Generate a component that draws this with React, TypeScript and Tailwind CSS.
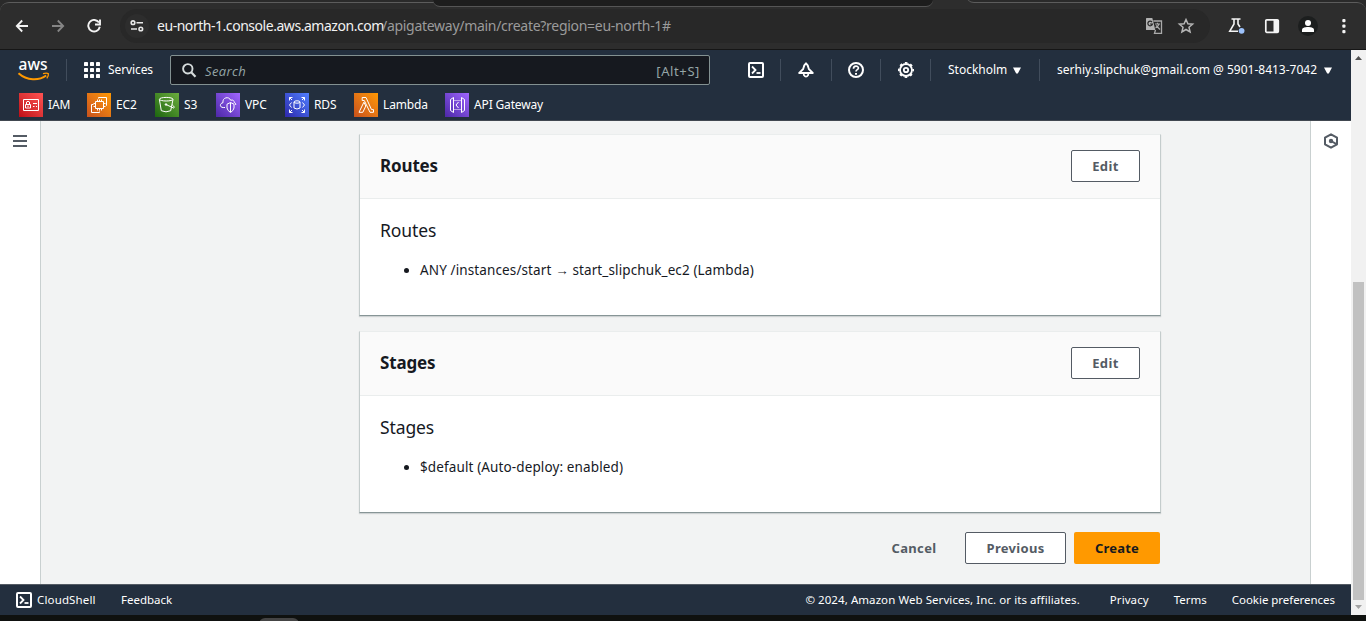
import type { ReactNode } from 'react';

const ember = "font-['Noto_Sans','Open_Sans',sans-serif]";

function TerminalIcon() {
  return (
    <svg width="16" height="16" viewBox="0 0 16 16" fill="none" stroke="#fff" strokeWidth="2" className="shrink-0">
      <rect x="1" y="1" width="14" height="14" rx="1" />
      <path d="M4 4.5L7.5 8L4 11.5" strokeWidth="1.8" />
      <path d="M8.5 11H12.5" strokeWidth="1.8" />
    </svg>
  );
}

function BrowserBar() {
  return (
    <div className="relative h-[50px] shrink-0 overflow-hidden bg-[#2a2a2a] pt-[2px]">
      <div className="flex h-[48px] items-center rounded-t-[9px] border-t border-b border-t-[#5c5c5c] border-b-[#161616] bg-[#2d2d2d]">
        <svg className="ml-[15px] shrink-0" width="14" height="14" viewBox="0 0 14 14" fill="none" stroke="#f3f3f3" strokeWidth="1.8"><path d="M13 7H2M7.2 1.5L1.8 7L7.2 12.5" /></svg>
        <svg className="ml-[22px] shrink-0" width="14" height="14" viewBox="0 0 14 14" fill="none" stroke="#858585" strokeWidth="1.8"><path d="M1 7H12M6.8 1.5L12.2 7L6.8 12.5" /></svg>
        <svg className="ml-[22px] shrink-0" width="14" height="14" viewBox="0 0 14 14" fill="none" stroke="#f3f3f3" strokeWidth="1.9"><path d="M12 3.6A5.8 5.8 0 1 0 12.8 7.8" /><path d="M13 0.6V5.5H8" /></svg>
        <div className="ml-[19px] flex h-[34px] w-[1090px] shrink-0 items-center rounded-full bg-[#282828] pl-[5px]">
          <div className="flex size-6 items-center justify-center rounded-full bg-[#2d2d2d]">
            <svg width="14" height="14" viewBox="0 0 14 14" fill="none" stroke="#e8e8e8" strokeWidth="1.6"><circle cx="3" cy="3.7" r="1.8" /><path d="M6.5 3.7H13M1 10H7" /><circle cx="10.8" cy="10" r="1.8" /></svg>
          </div>
          <div className="ml-[8px] flex whitespace-pre font-['Noto_Sans',sans-serif] text-[14px] leading-5">
            <span className="w-[225px] tracking-[-0.46px] text-[#f2f2f2]">eu-north-1.console.aws.amazon.com</span>
            <span className="tracking-[-0.29px] text-[#9b9b9b]">/apigateway/main/create?region=eu-north-1#</span>
          </div>
          <svg className="ml-auto shrink-0" width="18" height="18" viewBox="0 0 18 18">
            <path d="M8.3 4H16.5V16.3H9.5L10.5 13" fill="none" stroke="#aaa" strokeWidth="1.3" />
            <path d="M1.5 1H7.3L10.3 13H1.5Q1 13 1 12.5V1.5Q1 1 1.5 1Z" fill="#b2b2b2" />
            <path d="M7 5.1A2.3 2.3 0 1 0 7.4 7H5" fill="none" stroke="#282828" strokeWidth="1.2" />
            <path d="M10 7H15M12.5 5.8V7M14 7Q13 10 10.5 11M11 8.5L15 12.5" fill="none" stroke="#aaa" strokeWidth="1.2" />
          </svg>
          <svg className="ml-[14px] mr-[15px] shrink-0" width="18" height="18" viewBox="0 0 18 18" fill="none" stroke="#b5b5b5" strokeWidth="1.5"><path d="M9 2.5L10.9 6.8L15.6 7.2L12 10.3L13.1 15L9 12.5L4.9 15L6 10.3L2.4 7.2L7.1 6.8Z" /></svg>
        </div>
        <svg className="ml-[18px] shrink-0" width="18" height="18" viewBox="0 0 18 18" fill="none" stroke="#f4f4f4" strokeWidth="1.6"><path d="M3.5 2H12.5M6 2V7L1.8 14.2H10M10 2V7L12 10" /><circle cx="13.6" cy="13.8" r="2.9" fill="#9dc2fb" stroke="none" /></svg>
        <svg className="ml-[18px] shrink-0" width="16" height="16" viewBox="0 0 16 16"><rect x="1.8" y="1.8" width="12.5" height="12.5" rx="1" fill="none" stroke="#f4f4f4" strokeWidth="1.7" /><path d="M9.5 2H15V14H9.5Z" fill="#f4f4f4" /></svg>
        <div className="ml-[18px] flex size-5 shrink-0 items-center justify-center rounded-full bg-[#1c1e1e]">
          <svg width="14" height="14" viewBox="0 0 14 14" fill="#fff"><circle cx="7" cy="4" r="3" /><path d="M1 13V11C1 8.8 4 8 7 8S13 8.8 13 11V13Z" /></svg>
        </div>
        <svg className="ml-[24px] shrink-0" width="4" height="16" viewBox="0 0 4 16" fill="#f4f4f4"><rect x=".3" y="1" width="3.2" height="3.2" rx="1" /><rect x=".3" y="6.5" width="3.2" height="3.2" rx="1" /><rect x=".3" y="12" width="3.2" height="3.2" rx="1" /></svg>
      </div>
      <div className="absolute top-0 left-[925px] h-[4px] w-[50px] bg-[#2d2d2d]" />
      <div className="absolute top-0 left-[433px] h-[7px] w-[500px] rounded-b-[8px] border-b border-[#555] bg-[#1d1d1d]" />
      <div className="absolute top-[-7px] left-[966px] h-[10px] w-[384px] rounded-bl-[8px] border-b border-[#5c5c5c] bg-[#2a2a2a]" />
    </div>
  );
}

function Divider({ className }: { className: string }) {
  return <div className={`h-[22px] w-px shrink-0 bg-[#414d5c] ${className}`} />;
}

function Caret({ className }: { className: string }) {
  return <svg className={className} width="8" height="7" viewBox="0 0 8 7" fill="#fff"><path d="M0 .5H8L4.8 6.5H3.2Z" /></svg>;
}

type ServiceProps = { name: string; box: string; label: string; children: ReactNode };

function Service({ name, box, label, children }: ServiceProps) {
  return (
    <div className={`flex shrink-0 items-center ${box}`}>
      <div className={`size-6 shrink-0 ${label}`}>
        <svg width="24" height="24" viewBox="0 0 24 24" fill="none" stroke="#fff" strokeWidth="1">{children}</svg>
      </div>
      <span className="ml-[5px] whitespace-nowrap text-[12px] leading-5 tracking-[-0.15px]">{name}</span>
    </div>
  );
}

function Header() {
  return (
    <header className={`h-[71px] shrink-0 border-b border-[#414750] bg-[#232f3e] text-[12px] text-white ${ember}`}>
      <div className="flex h-10 items-center">
        <svg className="ml-[17px] shrink-0" width="34" height="34" viewBox="0 -6 34 34">
          <text x="1.5" y="10.8" fontFamily="Noto Sans, sans-serif" fontSize="16.5" fontWeight="500" fill="#fff" textLength="29" lengthAdjust="spacingAndGlyphs">aws</text>
          <path d="M1.5 14.2C10 21.8 22 21.8 29.2 16.5" fill="none" stroke="#f90" strokeWidth="2" />
          <path d="M26 14.6Q30 13.5 31.4 14.7Q31.7 17 29.8 19.4" fill="none" stroke="#f90" strokeWidth="1.3" />
        </svg>
        <Divider className="ml-[15px]" />
        <svg className="ml-[17px] shrink-0" width="16" height="16" viewBox="0 0 16 16" fill="#fff">
          {[0, 6, 12].map((y) => [0, 6, 12].map((x) => <rect key={`${x}-${y}`} x={x} y={y} width="4" height="4" rx=".4" />))}
        </svg>
        <span className="ml-[8px] w-[46px] whitespace-nowrap text-[12px] tracking-[-0.1px]">Services</span>
        <div className="ml-[16px] flex h-[30px] w-[540px] shrink-0 items-center rounded-[2px] border border-[#839191] bg-[#16191f] pl-[11px] pr-[9px] text-[13px] text-[#95a5a6]">
          <svg width="15" height="15" viewBox="0 0 15 15" fill="none" stroke="#d5dbdb" strokeWidth="1.9"><circle cx="5.8" cy="5.8" r="4.7" /><path d="M9.2 9.2L13.5 13.8" strokeWidth="2.2" /></svg>
          <span className="ml-[8px] pt-[3px] font-['Open_Sans',sans-serif] tracking-[0.35px] italic">Search</span>
          <span className="ml-auto pt-[3px] tracking-[0.6px]">[Alt+S]</span>
        </div>
        <div className="ml-[38px] flex"><TerminalIcon /></div>
        <Divider className="ml-[16px]" />
        <svg className="ml-[17px] shrink-0" width="16" height="16" viewBox="0 0 16 16" fill="none" stroke="#fff" strokeWidth="1.8"><path d="M8 1.2C6 2.6 5.7 5 5.2 7L1.2 11H14.8L10.8 7C10.3 5 10 2.6 8 1.2Z" strokeLinejoin="round" /><path d="M5.8 11.5V13Q8 16.4 10.2 13V11.5" strokeWidth="1.7" /></svg>
        <Divider className="ml-[17px]" />
        <svg className="ml-[16px] shrink-0" width="16" height="16" viewBox="0 0 16 16" fill="none" stroke="#fff" strokeWidth="2"><circle cx="8" cy="8" r="7" /><path d="M5.5 6.7C5.5 3.4 10.4 3.6 10.4 6C10.4 7.8 8 7.4 8 9.5" strokeWidth="1.7" /><path d="M7 11H9V12.7H7Z" fill="#fff" stroke="none" /></svg>
        <Divider className="ml-[16px]" />
        <svg className="ml-[17px] shrink-0" width="16" height="16" viewBox="0 0 16 16" fill="none" stroke="#fff"><circle cx="8" cy="8" r="6" strokeWidth="1.8" /><circle cx="8" cy="8" r="7.2" strokeWidth="1.6" strokeDasharray="2.6 3.05" strokeDashoffset="1.3" /><circle cx="8" cy="8" r="2.2" strokeWidth="1.8" /></svg>
        <Divider className="ml-[16px]" />
        <span className="ml-[17px] w-[60px] whitespace-nowrap text-[12px]">Stockholm</span>
        <Caret className="ml-[5px] shrink-0" />
        <Divider className="ml-[18px]" />
        <span className="ml-[17px] w-[262px] whitespace-nowrap text-[12px]">serhiy.slipchuk@gmail.com @ 5901-8413-7042</span>
        <Caret className="ml-[5px] shrink-0" />
      </div>
      <div className="flex h-[30px] items-center pl-[19px]">
        <Service name="IAM" box="w-[68px]" label="bg-linear-to-tr from-[#bd0816] to-[#ff5252]">
          <path d="M4.5 6.5H19.5V17.5H4.5Z" /><path d="M6.5 11.5H11.5V15H6.5ZM7.5 11.5V9Q9 7.5 10.5 9V11.5M9 12.5V14M14 10.5H18M14 13.5H15.5M17 13.5H18" />
        </Service>
        <Service name="EC2" box="w-[68px]" label="bg-linear-to-tr from-[#c8511b] to-[#f90]">
          <path d="M8.5 8.5H16.5V15.5H8.5ZM10.5 8V6.5M12.5 8V6.5M14.5 8V6.5M10.5 16V17.5M12.5 16V17.5M14.5 16V17.5M8 10.5H6.5M8 13.5H6.5M17 10.5H18.5M17 13.5H18.5M11.5 5.5V4.5H19.5V12.5H19M6.5 11.5H4.5V19.5H12.5V18.5" />
        </Service>
        <Service name="S3" box="w-[61px]" label="bg-linear-to-tr from-[#1b660f] to-[#6cae3e]">
          <ellipse cx="11.2" cy="6.2" rx="6.8" ry="1.8" /><path d="M4.4 6.5L6.3 17.7Q11 20 15.7 17.7L18 6.5M11 11.5L18.5 15Q20.5 14.5 17 11.5" /><circle cx="11" cy="11.5" r=".8" fill="#fff" />
        </Service>
        <Service name="VPC" box="w-[69px]" label="bg-linear-to-tr from-[#4d27a8] to-[#a166ff]">
          <path d="M9 14.5H7.3C3.3 14.5 3.6 10.2 7 9.7C6 4.5 13 2.8 14.7 7.3C17 6.3 18.3 8 18.2 9.5Q20 9.8 19.8 12" /><path d="M14.5 9.5L18 11.2V15Q17.5 17.6 14.5 19.5Q11.5 17.6 11 15V11.2ZM14.5 9.5V19" />
        </Service>
        <Service name="RDS" box="w-[69px]" label="bg-linear-to-tr from-[#2e27ad] to-[#527fff]">
          <ellipse cx="12" cy="9" rx="3" ry="1.2" /><path d="M9 9V15Q12 17 15 15V9M4.5 7.5V4.5H7.5M4.5 4.5L7 7M16.5 4.5H19.5V7.5M19.5 4.5L17 7M4.5 16.5V19.5H7.5M4.5 19.5L7 17M19.5 16.5V19.5H16.5M19.5 19.5L17 17M6.5 9.5L4.5 12L6.5 14.5M17.5 9.5L19.5 12L17.5 14.5" />
        </Service>
        <Service name="Lambda" box="w-[91px]" label="bg-linear-to-tr from-[#c8511b] to-[#f90]">
          <path d="M5 19.3H8.8L11.8 13L9.9 9.2ZM8.2 4.5V7.5H10.3L16 19.3H19.5V16.6H17.5L12 4.5Z" />
        </Service>
        <Service name="API Gateway" box="w-[110px]" label="bg-linear-to-tr from-[#4d27a8] to-[#a166ff]">
          <path d="M5.5 6.5L8.5 4.5V19.5L5.5 17.5ZM19.5 6.5L16.5 4.5V19.5L19.5 17.5ZM13.5 9L11 12L13.5 15" /><path d="M9.5 7.5H16M9.5 16.5H16" strokeDasharray="1 1" />
        </Service>
      </div>
    </header>
  );
}

function Button({ children, className }: { children: ReactNode; className: string }) {
  return <button className={`flex h-8 shrink-0 items-center justify-center rounded-[2px] pt-px text-[13px] font-bold whitespace-nowrap ${className}`}>{children}</button>;
}

function Panel({ title, children }: { title: string; children: ReactNode }) {
  return (
    <section className="h-[182px] w-[802px] border border-t-[#eaeded] border-r-[#c4cccc] border-b-[#879596] border-l-[#c4cccc] bg-white text-[#16191f] shadow-[0_1px_1px_0_rgba(0,28,36,0.15)]">
      <div className="flex h-[64px] items-center justify-between border-b border-[#eaeded] bg-[#fafafa] px-5 pb-px">
        <h2 className="text-[17px] leading-6 font-bold tracking-[-0.15px]">{title}</h2>
        <Button className="w-[69px] border border-[#545b64] bg-white tracking-[0.4px] text-[#545b64]">Edit</Button>
      </div>
      <div className="px-5 pt-[19px]">
        <h3 className="text-[17.5px] leading-6 tracking-[-0.1px]">{title}</h3>
        <ul className="mt-[19px] list-none">
          <li className="flex items-center pl-[24px] text-[13.5px] leading-[18px] tracking-[0.12px]">
            <span className="mr-[11px] size-[5px] rounded-full bg-[#16191f]" />
            {children}
          </li>
        </ul>
      </div>
    </section>
  );
}

export default function App() {
  return (
    <div className="flex h-[621px] w-[1366px] flex-col overflow-hidden bg-[#0f110f]">
      <BrowserBar />
      <div className="flex h-[565px] shrink-0">
        <div className={`flex w-[1351px] shrink-0 flex-col ${ember}`}>
          <Header />
          <main className="flex h-[463px] shrink-0 bg-[#f2f3f3]">
            <aside className="w-[41px] shrink-0 border-r border-[#c9d0d0] bg-white pt-[14px] pl-[13px]">
              <svg width="14" height="12" viewBox="0 0 14 12" fill="#545b64"><path d="M0 0H14V2H0ZM0 5H14V7H0ZM0 10H14V12H0Z" /></svg>
            </aside>
            <div className="flex-1 pt-[13px] pl-[318px]">
              <div className="flex w-[802px] flex-col gap-[15px]">
                <Panel title="Routes">
                  <span className="whitespace-pre">ANY /instances/start <span className="font-['Liberation_Sans']">→</span> start_slipchuk_ec2 (Lambda)</span>
                </Panel>
                <Panel title="Stages">
                  <span>$default (Auto-deploy: enabled)</span>
                </Panel>
              </div>
              <div className="mt-[19px] flex w-[801px] items-center justify-end">
                <Button className="mr-[28px] w-[46px] tracking-[0.35px] text-[#545b64]">Cancel</Button>
                <Button className="mr-2 w-[101px] border border-[#545b64] bg-white tracking-[0.3px] text-[#545b64]">Previous</Button>
                <Button className="w-[86px] bg-[#f90] tracking-[0.2px] text-[#16191f]">Create</Button>
              </div>
            </div>
            <aside className="w-[41px] shrink-0 border-l border-[#c9d0d0] bg-white pt-[12px] pl-[12px]">
              <svg width="16" height="17" viewBox="0 0 16 17" fill="none" stroke="#545b64" strokeWidth="2"><path d="M8 1.3L14 4.7V11.3L8 14.7L2 11.3V4.7Z" strokeLinejoin="round" /><circle cx="8" cy="8" r="2.2" fill="#545b64" stroke="none" /><path d="M8 8L13.5 11.2" /></svg>
            </aside>
          </main>
          <footer className="flex h-[31px] shrink-0 items-center border-t border-[#545b64] bg-[#232f3e] pr-[16px] pl-4 text-[11.5px] whitespace-nowrap text-white">
            <TerminalIcon />
            <span className="ml-[5px] w-[84px] tracking-[0.15px]">CloudShell</span>
            <span>Feedback</span>
            <span className="ml-auto tracking-[0.07px]">© 2024, Amazon Web Services, Inc. or its affiliates.</span>
            <span className="ml-[30px] tracking-[0.08px]">Privacy</span>
            <span className="ml-[25px]">Terms</span>
            <span className="ml-[25px] tracking-[-0.04px]">Cookie preferences</span>
          </footer>
        </div>
        <div className="flex w-[15px] flex-col items-center bg-[#f1f1f1]">
          <svg className="shrink-0" width="15" height="16" viewBox="0 0 15 16"><path d="M4 10L7.5 6L11 10Z" fill="#505050" /></svg>
          <div className="mt-[216px] h-[318px] w-[11px] bg-[#c1c1c1]" />
          <svg className="shrink-0" width="15" height="15" viewBox="0 0 15 15"><path d="M4 5H11L7.5 9Z" fill="#a3a3a3" /></svg>
        </div>
      </div>
      <div className="h-[6px] shrink-0 overflow-hidden bg-[#0f110f] pt-[3px] pl-[259px]"><div className="h-3 w-[40px] rounded-full bg-[#444]" /></div>
    </div>
  );
}
